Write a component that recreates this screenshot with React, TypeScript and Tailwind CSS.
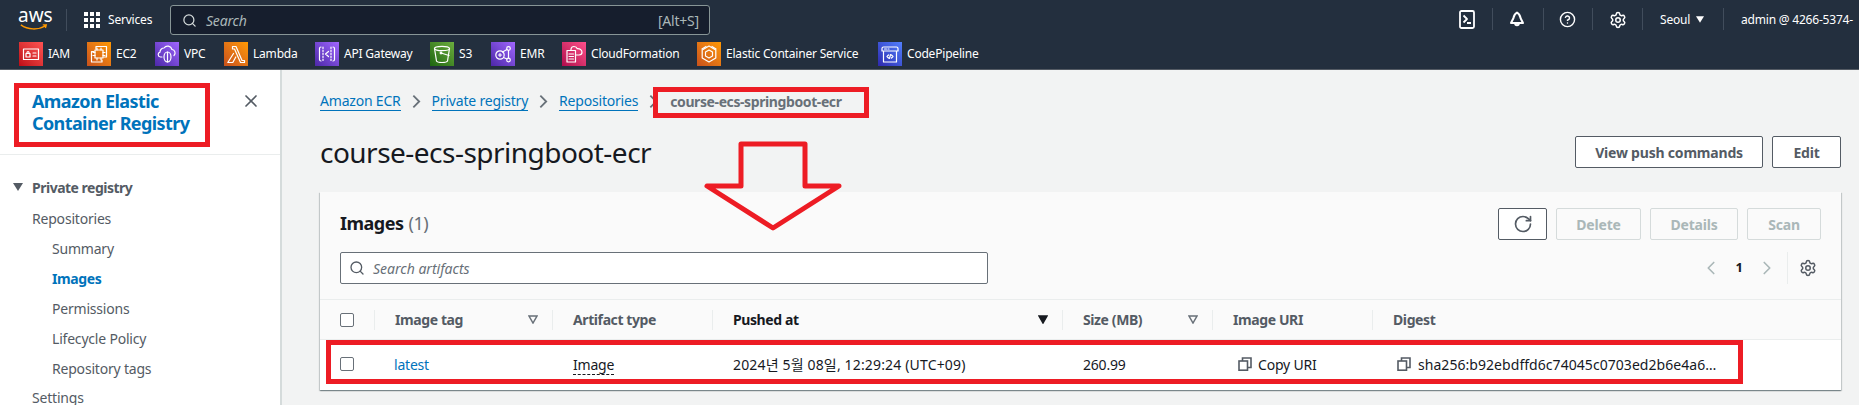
import React from "react";
import { Settings, CircleHelp, Search, RotateCw, ChevronLeft, ChevronRight, X } from "lucide-react";

const FONT = { fontFamily: '"Noto Sans","Noto Sans CJK KR",sans-serif' };

function Glyph({ children }: { children: React.ReactNode }) {
  return (
    <svg viewBox="0 0 24 24" className="w-[24px] h-[24px]" fill="none" stroke="#fff" strokeWidth="1.2" strokeLinejoin="round" strokeLinecap="round">
      {children}
    </svg>
  );
}

const marks: Record<string, { bg: string; g: React.ReactNode }> = {
  IAM: { bg: "bg-linear-to-tr from-[#bd0816] to-[#ff5252]", g: (<><rect x="4.5" y="7" width="15" height="10.5" /><rect x="7" y="11.5" width="4" height="3.5" /><path d="M8 11.5v-1a1 1 0 0 1 2 0v1M14 11h3M14 14h3" /></>) },
  EC2: { bg: "bg-linear-to-tr from-[#c8511b] to-[#ff9900]", g: (<><path d="M9 7V4.5h10.5V15H17" /><rect x="8" y="8" width="8" height="8" /><path d="M10 6v2M14 6v2M10 16v2M14 16v2M6 10.500h2M6 13.500h2M16 10.500h2M16 13.500h2M7 9.500H4.500V20H15v-2" /></>) },
  VPC: { bg: "bg-linear-to-tr from-[#4d27a8] to-[#a166ff]", g: (<><path d="M7 15H5.500a2.500 2.500 0 0 1-.5-4.900 4 4 0 0 1 4-4.100 4.500 4.500 0 0 1 8 1.500 3.500 3.500 0 0 1 2 6" /><ellipse cx="12.500" cy="15" rx="3.500" ry="5" /><path d="M12.500 10v10" /></>) },
  Lambda: { bg: "bg-linear-to-tr from-[#c8511b] to-[#ff9900]", g: (<><path d="M8.500 4.500h3.500l6 14h2.500v2H16.500L10.500 7H8.500z" /><path d="M9.500 11.500 3.800 20.500h5l3-5.500" /></>) },
  APIG: { bg: "bg-linear-to-tr from-[#4d27a8] to-[#a166ff]", g: (<><path d="M6 5c-1 0-1.500.5-1.500 1.500v11c0 1 .5 1.500 1.500 1.500M18 5c1 0 1.500.5 1.500 1.500v11c0 1-.5 1.500-1.500 1.500" /><path d="M8 5v14M16 5v14" strokeDasharray="1.500 1.500" /><path d="M13.500 9.500 10.500 12l3 2.500" /></>) },
  S3: { bg: "bg-linear-to-tr from-[#1b660f] to-[#6cae3e]", g: (<><ellipse cx="12" cy="6.500" rx="7.500" ry="2.200" /><path d="M4.500 6.500 6.500 19c.5 1 3 1.500 5.500 1.500s5-.5 5.500-1.500l2-12.500" /><path d="M11 11l8 2.500" /><circle cx="11" cy="11" r=".8" /></>) },
  EMR: { bg: "bg-linear-to-tr from-[#4d27a8] to-[#a166ff]", g: (<><circle cx="9" cy="13" r="4.200" /><circle cx="17.500" cy="6.500" r="1.800" /><circle cx="17.500" cy="18" r="1.800" /><path d="M11.500 10 16 7.500M12.500 15.500l3.500 1.500M17.500 8.500v7.500M7.500 13h3M9 11.500v3" /></>) },
  CF: { bg: "bg-linear-to-tr from-[#b0084d] to-[#ff4f8b]", g: (<><path d="M5 8.500h8.500v11.500H5z" /><path d="M7 12h4.500M7 14.500h4.500M7 17h4.500" /><path d="M9 8.500V7a3 3 0 0 1 3-2.500c1.500 0 2.800.8 3.300 2.200 2.500-.2 4.700 1.300 4.700 3.600 0 1.700-1.200 2.700-3 2.700h-3.500" /></>) },
  ECS: { bg: "bg-linear-to-tr from-[#c8511b] to-[#ff9900]", g: (<><path d="M12 4 18.800 8v8L12 20l-6.800-4V8z" /><path d="M12 8l3.500 2v4L12 16l-3.500-2v-4z" /><path d="M9 4.500 5 7M15 4.500 19 7" /></>) },
  CP: { bg: "bg-linear-to-tr from-[#2e27ad] to-[#527fff]", g: (<><path d="M5.500 5h13c1 0 1.500.7 1.500 1.500V9H4V6.500C4 5.700 4.500 5 5.500 5zM5.500 9v11h13V9" /><path d="M6.500 7h2M10 7h1M10.500 16l-1.500-1.500 1.500-1.500M13.500 13l1.500 1.500-1.500 1.500M12.500 12.500l-1 4" /></>) },
};

const bookmarks: [string, string, string][] = [
  ["IAM", "IAM", "w-[68px]"],
  ["EC2", "EC2", "w-[68px]"],
  ["VPC", "VPC", "w-[69px]"],
  ["Lambda", "Lambda", "w-[91px]"],
  ["APIG", "API Gateway", "w-[115px]"],
  ["S3", "S3", "w-[61px]"],
  ["EMR", "EMR", "w-[71px]"],
  ["CF", "CloudFormation", "w-[135px]"],
  ["ECS", "Elastic Container Service", "w-[181px]"],
  ["CP", "CodePipeline", "w-[110px]"],
];

function Bell() {
  return (
    <svg viewBox="0 0 16 16" className="w-[16px] h-[16px]" fill="none" stroke="#fff" strokeWidth="2" strokeLinejoin="round">
      <path d="M8 1.500c2.300 1.500 3.300 3 3.500 5.500l2.500 5H2l2.500-5C4.700 4.500 5.700 3 8 1.500z" />
      <path d="M6.200 12.500a1.800 1.800 0 0 0 3.600 0" />
    </svg>
  );
}

function Shell() {
  return (
    <svg viewBox="0 0 16 19" className="w-[16px] h-[19px]" fill="none" stroke="#fff" strokeWidth="1.800" strokeLinejoin="round">
      <rect x="1" y="1" width="14" height="17" rx="1.500" />
      <path d="M4.500 5.500 8 9l-3.500 3.500M8 13h4" />
    </svg>
  );
}

function Copy() {
  return (
    <svg viewBox="0 0 14 14" className="w-[14px] h-[14px] shrink-0" fill="none" stroke="#545b64" strokeWidth="1.600">
      <rect x="1" y="4" width="8.500" height="9.200" />
      <path d="M4.500 4V1H13v9.500H9.500" />
    </svg>
  );
}

function Tri({ filled }: { filled?: boolean }) {
  return (
    <svg viewBox="0 0 10 9" className="w-[10px] h-[9px]" fill={filled ? "#16191f" : "none"} stroke={filled ? "#16191f" : "#687078"} strokeWidth="1.500">
      <path d="M1 1h8L5 8z" />
    </svg>
  );
}

function Crumb({ children }: { children: React.ReactNode }) {
  return <span className="text-[#0073bb] border-b border-[#0073bb] leading-[19px]">{children}</span>;
}

function Sep() {
  return (
    <svg viewBox="0 0 10 16" className="w-[9px] h-[15px] mx-[11px]" fill="none" stroke="#687078" strokeWidth="2">
      <path d="M1.500 1.500 8 8l-6.500 6.500" />
    </svg>
  );
}

const cols = "grid grid-cols-[54px_178px_160px_350px_150px_160px_469px]";

function Head({ label, sort, dark }: { label: string; sort?: "off" | "on"; dark?: boolean }) {
  return (
    <div className="flex items-center h-[20px] border-l border-[#eaeded] pl-[20px] pr-[14px] justify-between">
      <span className={`font-bold tracking-[-0.4px] ${dark ? "text-[#16191f]" : "text-[#545b64]"}`}>{label}</span>
      {sort && <Tri filled={sort === "on"} />}
    </div>
  );
}

function Btn({ children, className }: { children: React.ReactNode; className: string }) {
  return (
    <div className={`h-[32px] flex items-center justify-center rounded-[2px] border font-bold text-[14px] ${className}`}>
      {children}
    </div>
  );
}

function Check() {
  return <div className="w-[14px] h-[14px] rounded-[2px] border border-[#687078] bg-white" />;
}

export default function App() {
  return (
    <div className="relative w-[1859px] h-[405px] overflow-hidden bg-[#f2f3f3] text-[14px] text-[#16191f] tracking-[-0.2px]" style={FONT}>
      <header className="h-[70px] bg-[#232f3e] border-b border-[#545b64] text-white text-[12px]">
        <div className="h-[40px] flex items-center relative">
          <div className="w-[66px] pl-[18px] flex flex-col items-start h-[32px]">
            <span className="text-[19px] leading-[17px] mt-[3px] tracking-[0px]">aws</span>
            <svg viewBox="0 0 32 8" className="w-[32px] h-[7px]" fill="none" stroke="#f90" strokeWidth="1.600"><path d="M1 1c8 6 20 6 28 1M26 1h4l-1 3.500" /></svg>
          </div>
          <div className="w-px h-[22px] bg-[#414d5c]" />
          <div className="grid grid-cols-3 gap-[2px] ml-[17px] w-[16px] h-[16px]">
            {Array.from({ length: 9 }).map((_, i) => (
              <div key={i} className="w-[4px] h-[4px] bg-white" />
            ))}
          </div>
          <span className="ml-[8px] w-[62px]">Services</span>
          <div className="w-[540px] h-[30px] flex items-center bg-[#161e2d] border border-[#879596] rounded-[3px] pl-[11px] pr-[10px] text-[#aab7b8]">
            <Search size={15} color="#d5dbdb" strokeWidth={2} />
            <span className="ml-[9px] italic text-[14px]">Search</span>
            <span className="ml-auto text-[14px]">[Alt+S]</span>
          </div>
          <div className="absolute left-[1459px] top-[10px]"><Shell /></div>
          <div className="absolute left-[1492px] top-[8px] w-px h-[22px] bg-[#414d5c]" />
          <div className="absolute left-[1509px] top-[11px]"><Bell /></div>
          <div className="absolute left-[1543px] top-[8px] w-px h-[22px] bg-[#414d5c]" />
          <div className="absolute left-[1559px] top-[11px]"><CircleHelp size={17} strokeWidth={2} /></div>
          <div className="absolute left-[1592px] top-[8px] w-px h-[22px] bg-[#414d5c]" />
          <div className="absolute left-[1609px] top-[11px]"><Settings size={18} strokeWidth={2} /></div>
          <div className="absolute left-[1642px] top-[8px] w-px h-[22px] bg-[#414d5c]" />
          <span className="absolute left-[1660px] top-[11px]">Seoul</span>
          <svg viewBox="0 0 10 8" className="absolute left-[1696px] top-[16px] w-[8px] h-[7px]" fill="#fff"><path d="M0 0h10L5 8z" /></svg>
          <div className="absolute left-[1723px] top-[8px] w-px h-[22px] bg-[#414d5c]" />
          <span className="absolute left-[1741px] top-[11px] whitespace-nowrap">admin @ 4266-5374-</span>
        </div>
        <div className="flex items-center pl-[19px] h-[24px] mt-[2px]">
          {bookmarks.map(([k, label, w]) => (
            <div key={k} className={`flex items-center gap-[5px] shrink-0 ${w}`}>
              <div className={`w-[24px] h-[24px] shrink-0 ${marks[k].bg}`}>
                <Glyph>{marks[k].g}</Glyph>
              </div>
              <span className="whitespace-nowrap">{label}</span>
            </div>
          ))}
        </div>
      </header>

      <div className="flex">
        <aside className="w-[282px] h-[335px] shrink-0 bg-white border-r-2 border-[#d5dbdb] text-[#545b64] overflow-hidden">
          <div className="h-[85px] border-b border-[#eaeded] pt-[20px] pl-[32px] flex items-start">
            <div className="w-[200px] text-[18px] leading-[22px] font-bold text-[#0073bb] tracking-[-0.6px]">
              Amazon Elastic<br />Container Registry
            </div>
            <X size={20} color="#545b64" strokeWidth={2} className="ml-[9px] mt-[1px]" />
          </div>
          <div className="mt-[17px] h-[30px] mb-[1px] flex items-center pl-[13px] font-bold tracking-[-0.5px]">
            <svg viewBox="0 0 10 8" className="w-[10px] h-[8px] mr-[9px]" fill="#545b64"><path d="M0 0h10L5 8z" /></svg>
            Private registry
          </div>
          <div className="h-[30px] flex items-center pl-[32px]">Repositories</div>
          <div className="h-[30px] flex items-center pl-[52px]">Summary</div>
          <div className="h-[30px] flex items-center pl-[52px] font-bold text-[#0073bb] tracking-[-0.4px]">Images</div>
          <div className="h-[30px] flex items-center pl-[52px]">Permissions</div>
          <div className="h-[30px] flex items-center pl-[52px]">Lifecycle Policy</div>
          <div className="h-[30px] flex items-center pl-[52px]">Repository tags</div>
          <div className="h-[22px] pt-[8px] leading-[14px] pl-[32px]">Settings</div>
        </aside>

        <main className="flex-1 pl-[38px] pr-[18px] pt-[21px]">
          <nav className="flex items-center h-[20px]">
            <Crumb>Amazon ECR</Crumb>
            <Sep />
            <Crumb>Private registry</Crumb>
            <Sep />
            <Crumb>Repositories</Crumb>
            <Sep />
            <span className="ml-[1px] font-bold text-[#687078] tracking-[-0.4px]">course-ecs-springboot-ecr</span>
          </nav>

          <div className="flex items-center justify-between mt-[25px] h-[32px]">
            <h1 className="text-[28px] leading-[32px] text-[#16191f] tracking-[-0.52px]">course-ecs-springboot-ecr</h1>
            <div className="flex gap-[9px]">
              <Btn className="w-[188px] bg-white border-[#545b64] text-[#545b64]">View push commands</Btn>
              <Btn className="w-[69px] bg-white border-[#545b64] text-[#545b64]">Edit</Btn>
            </div>
          </div>

          <section className="mt-[24px] h-[198px] bg-white shadow-[0_1px_1px_0_rgba(0,28,36,0.3),1px_1px_1px_0_rgba(0,28,36,0.15),-1px_1px_1px_0_rgba(0,28,36,0.15)]">
            <div className="h-[108px] bg-[#fafafa] px-[20px] pt-[16px] border-b border-[#eaeded]">
              <div className="flex items-center h-[32px]">
                <span className="text-[18px] font-bold text-[#16191f] tracking-[-0.5px] -mt-[1px]">Images</span>
                <span className="text-[18px] text-[#687078] ml-[5px] -mt-[1px] tracking-[-0.5px]">(1)</span>
                <div className="ml-auto flex gap-[9px]">
                  <Btn className="w-[49px] bg-white border-[#545b64] text-[#545b64]"><RotateCw size={20} strokeWidth={2} /></Btn>
                  <Btn className="w-[85px] bg-[#fafafa] border-[#d5dbdb] text-[#aab7b8]">Delete</Btn>
                  <Btn className="w-[88px] bg-[#fafafa] border-[#d5dbdb] text-[#aab7b8]">Details</Btn>
                  <Btn className="w-[74px] bg-[#fafafa] border-[#d5dbdb] text-[#aab7b8]">Scan</Btn>
                </div>
              </div>
              <div className="flex items-center h-[32px] mt-[12px]">
                <div className="w-[648px] h-[32px] bg-white border border-[#687078] rounded-[2px] flex items-center pl-[8px]">
                  <Search size={16} color="#545b64" strokeWidth={2} />
                  <span className="ml-[8px] italic text-[#687078] text-[14px] tracking-[0px]">Search artifacts</span>
                </div>
                <div className="ml-auto flex items-center h-[32px]">
                  <ChevronLeft size={22} color="#aab7b8" strokeWidth={1.8} />
                  <span className="w-[34px] text-center font-bold text-[#16191f] text-[13px]">1</span>
                  <ChevronRight size={22} color="#aab7b8" strokeWidth={1.8} />
                  <div className="w-px h-[32px] bg-[#eaeded] ml-[9px]" />
                  <Settings size={18} color="#545b64" strokeWidth={2} className="ml-[11px] mr-[4px]" />
                </div>
              </div>
            </div>

            <div className={`${cols} items-center h-[40px] bg-[#fafafa] border-b border-[#eaeded]`}>
              <div className="pl-[20px]"><Check /></div>
              <Head label="Image tag" sort="off" />
              <Head label="Artifact type" />
              <Head label="Pushed at" sort="on" dark />
              <Head label="Size (MB)" sort="off" />
              <Head label="Image URI" />
              <Head label="Digest" />
            </div>

            <div className={`${cols} items-center h-[50px] pb-[1px]`}>
              <div className="pl-[20px] -mt-[1px]"><Check /></div>
              <div className="pl-[20px] text-[#0073bb] -mt-[1px]">latest</div>
              <div className="pl-[21px] -mt-[1px]"><span className="border-b border-dashed border-[#16191f]">Image</span></div>
              <div className="pl-[21px] -mt-[1px] tracking-[0.16px]">2024년 5월 08일, 12:29:24 (UTC+09)</div>
              <div className="pl-[21px] -mt-[1px]">260.99</div>
              <div className="pl-[26px] -mt-[1px] flex items-center gap-[6px]"><Copy />Copy URI</div>
              <div className="pl-[25px] -mt-[1px] flex items-center gap-[7px]"><Copy /><span className="whitespace-nowrap tracking-[0.05px]">sha256:b92ebdffd6c74045c0703ed2b6e4a6…</span></div>
            </div>
          </section>
        </main>
      </div>

      <div className="absolute left-[14px] top-[83px] w-[196px] h-[64px] border-[5px] border-[#ed1c24]" />
      <div className="absolute left-[653px] top-[87px] w-[216px] h-[31px] border-[5px] border-[#ed1c24]" />
      <div className="absolute left-[326px] top-[340px] w-[1417px] h-[44px] border-[5px] border-[#ed1c24]" />
      <svg className="absolute left-[700px] top-[136px] w-[146px] h-[100px]" viewBox="700 136 146 100" fill="none" stroke="#ed1c24" strokeWidth="5" strokeLinejoin="round">
        <path d="M741 144H805V186H839L773 228 707 186H741Z" />
      </svg>
    </div>
  );
}
